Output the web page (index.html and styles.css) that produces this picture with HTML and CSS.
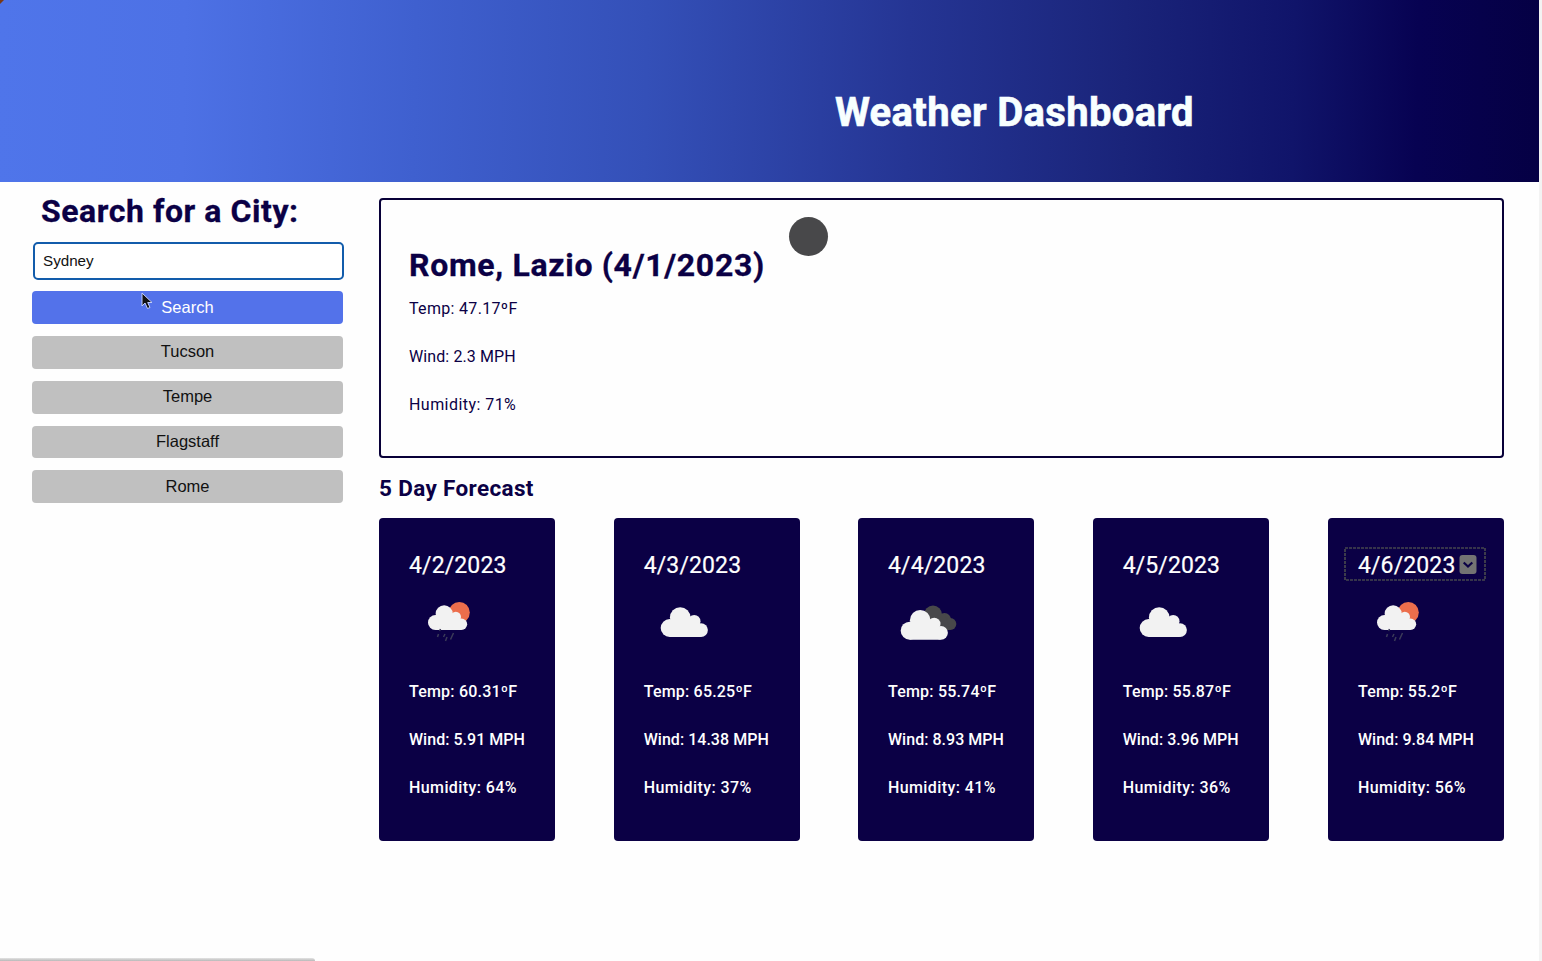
FILE: index.html
```html
<!DOCTYPE html>
<html lang="en">
<head>
<meta charset="utf-8">
<title>Weather Dashboard</title>
<link rel="stylesheet" href="styles.css">
</head>
<body>
<svg class="defs" aria-hidden="true">
  <defs>
    <g id="cloud"><circle cx="9" cy="20.700" r="9"/><circle cx="19.500" cy="10.300" r="10.300"/><circle cx="33.500" cy="14" r="6.300"/><circle cx="40.300" cy="22.800" r="6.900"/><path d="M9 14l10-6 14 4 7 8v9.700H9Z"/></g>
    <symbol id="cloudy" viewBox="0 0 80 80"><use href="#cloud" x="16.700" y="27.300" fill="#f2f2f2"/></symbol>
    <symbol id="broken" viewBox="0 0 80 80">
      <g fill="#48484a"><circle cx="45" cy="34.500" r="9"/><circle cx="56.500" cy="39.500" r="6.500"/><circle cx="62.300" cy="44" r="6"/><path d="M42 34l15 0 5 16H50Z"/></g>
      <use href="#cloud" x="12.700" y="30" fill="#f2f2f2"/>
    </symbol>
    <symbol id="rain" viewBox="0 0 80 80">
      <circle cx="50.300" cy="32.500" r="10.500" fill="#ec6e4c"/>
      <g transform="translate(19 25.300) scale(.83)"><use href="#cloud" fill="#f2f2f2"/></g>
      <path d="M31.500 49l-1 2M29.500 54l-1 3M36 54l-1.500 3M38 57l-1.500 4M44.500 53l-3 6.500" stroke="#3b3a58" stroke-width="1.500" fill="none"/>
    </symbol>
  </defs>
</svg>
<header class="banner"><h1>Weather Dashboard</h1></header>
<main class="page">
  <aside class="sidebar">
    <h2 class="search-title">Search for a City:</h2>
    <input class="city-input" type="text" value="Sydney">
    <button class="btn search">Search</button>
    <button class="btn">Tucson</button>
    <button class="btn">Tempe</button>
    <button class="btn">Flagstaff</button>
    <button class="btn">Rome</button>
  </aside>
  <section class="content">
    <div class="current">
      <h2 class="place">Rome, Lazio (4/1/2023)</h2>
      <p>Temp: 47.17ºF</p><p>Wind: 2.3 MPH</p><p class="humidity">Humidity: 71%</p>
      <span class="sun"></span>
    </div>
    <h3 class="forecast-title">5 Day Forecast</h3>
    <div class="forecast">
      <article class="card"><h4>4/2/2023</h4><svg class="icon"><use href="#rain"/></svg><p class="temp">Temp: 60.31ºF</p><p>Wind: 5.91 MPH</p><p class="humidity">Humidity: 64%</p></article>
      <article class="card wide"><h4>4/3/2023</h4><svg class="icon"><use href="#cloudy"/></svg><p class="temp">Temp: 65.25ºF</p><p>Wind: 14.38 MPH</p><p class="humidity">Humidity: 37%</p></article>
      <article class="card"><h4>4/4/2023</h4><svg class="icon"><use href="#broken"/></svg><p class="temp">Temp: 55.74ºF</p><p>Wind: 8.93 MPH</p><p class="humidity">Humidity: 41%</p></article>
      <article class="card"><h4>4/5/2023</h4><svg class="icon"><use href="#cloudy"/></svg><p class="temp">Temp: 55.87ºF</p><p>Wind: 3.96 MPH</p><p class="humidity">Humidity: 36%</p></article>
      <article class="card"><h4>4/6/2023</h4><svg class="icon"><use href="#rain"/></svg><p class="temp">Temp: 55.2ºF</p><p>Wind: 9.84 MPH</p><p class="humidity">Humidity: 56%</p>
        <svg class="outline" viewBox="0 0 142 34"><rect x="1" y="1" width="140" height="32" fill="none" stroke="#46464d" stroke-width="1.700" stroke-dasharray="3 1"/><rect x="115.500" y="8" width="17" height="19" rx="3" fill="#737373"/><path d="M119.700 15.500l4.300 4 4.300-4" fill="none" stroke="#0b0045" stroke-width="2.200"/></svg>
      </article>
    </div>
  </section>
</main>
<svg class="pointer" viewBox="0 0 12 18"><path d="M1 1v13l3-3 2.500 5.500 2.500-1L6.700 10.500H11Z" fill="#111" stroke="#c3cdf8"/></svg>
<div class="status-edge"></div>
<div class="corner"></div>
</body>
</html>
```
FILE: styles.css
```css
* { box-sizing: border-box; }
body { margin: 0; height: 961px; overflow: hidden; position: relative; background: #fefefe; color: #0b0045; font-family: Roboto, "Liberation Sans", sans-serif; border-right: 3px solid #f3f3f3; }
h1, h2, h3, h4, p { margin: 0; }
.defs { position: absolute; width: 0; height: 0; }
.banner { height: 182px; padding: 88px 345px 0 0; text-align: right; background: linear-gradient(91deg, #4f75ea 0%, #4d71e5 12%, #3f60cf 27%, #3450b8 42%, #253594 59%, #1a247a 73%, #10146a 84%, #070252 92%, #050044 100%); }
.banner h1 { color: #f8ffff; font-size: 40px; line-height: 50px; letter-spacing: .35px; -webkit-text-stroke: .6px #f8ffff; }
.page { display: flex; padding: 16px 35px 0 32px; gap: 36px; }
.sidebar { width: 311px; display: flex; flex-direction: column; gap: 12px; }
.search-title { font-size: 32px; line-height: 32px; padding-left: 9px; white-space: nowrap; margin-top: -3px; margin-bottom: 3px; letter-spacing: .55px; -webkit-text-stroke: .3px; }
.city-input { width: 311px; height: 38px; margin-left: 1px; border: 2px solid #125cab; border-radius: 5px; padding: 0 8px 2px; background: #fff; font: 15.200px "Liberation Sans", sans-serif; color: #111; }
.btn { height: 32.800px; border: 0; border-radius: 4px; background: #c0c0c0; font: 16.500px "Liberation Sans", sans-serif; color: #111; padding: 0 0 2px; }
.btn:nth-of-type(n+4) { padding-bottom: 1px; }
.search { background: #5372ea; color: #fff; padding: 0; margin-top: -.8px; }
.content { flex: 1; }
.current { position: relative; height: 260px; border: 2px solid #080038; border-radius: 4px; padding: 44px 28px; }
.place { font-size: 32px; line-height: 42px; margin-bottom: 11px; letter-spacing: .68px; -webkit-text-stroke: .3px; }
p { font-size: 16px; line-height: 24px; margin-bottom: 24px; white-space: nowrap; letter-spacing: .1px; }
.current p:nth-of-type(1) { letter-spacing: .32px; }
.humidity { letter-spacing: .45px; }
.sun { position: absolute; left: 408px; top: 17px; width: 39px; height: 39px; border-radius: 50%; background: #48484a; }
.forecast-title { font-size: 22.500px; line-height: 30px; margin: 15px 0; letter-spacing: .35px; }
.forecast { display: flex; gap: 58.700px; }
.card { position: relative; flex: none; width: 176px; height: 323px; padding: 33px 28px 0 30px; border-radius: 4px; background: #0b0045; color: #fff; }
.card:nth-child(3) { margin-left: -.4px; }
.card:nth-child(5) { margin-left: .6px; }
.wide { width: 186px; }
.card h4 { font-size: 23px; line-height: 30px; font-weight: 400; letter-spacing: .12px; -webkit-text-stroke: .2px; }
.card p { font-weight: 500; letter-spacing: .03px; }
.card .temp { letter-spacing: .2px; }
.card .humidity { letter-spacing: .4px; }
.icon { display: block; width: 80px; height: 80px; margin: -1px 0 20px; }
.outline { position: absolute; left: 16px; top: 29px; width: 142px; height: 34px; }
.pointer { position: absolute; left: 141px; top: 292px; width: 12px; height: 18px; }
.status-edge { position: absolute; left: 0; bottom: 0; width: 315px; height: 3px; background: linear-gradient(#e4e4e4, #b8b8b8); border-radius: 0 3px 0 0; }
.corner { position: absolute; left: 0; top: 0; width: 8px; height: 4px; background: #793914; clip-path: polygon(0 0, 50% 0, 0 100%); }
```
